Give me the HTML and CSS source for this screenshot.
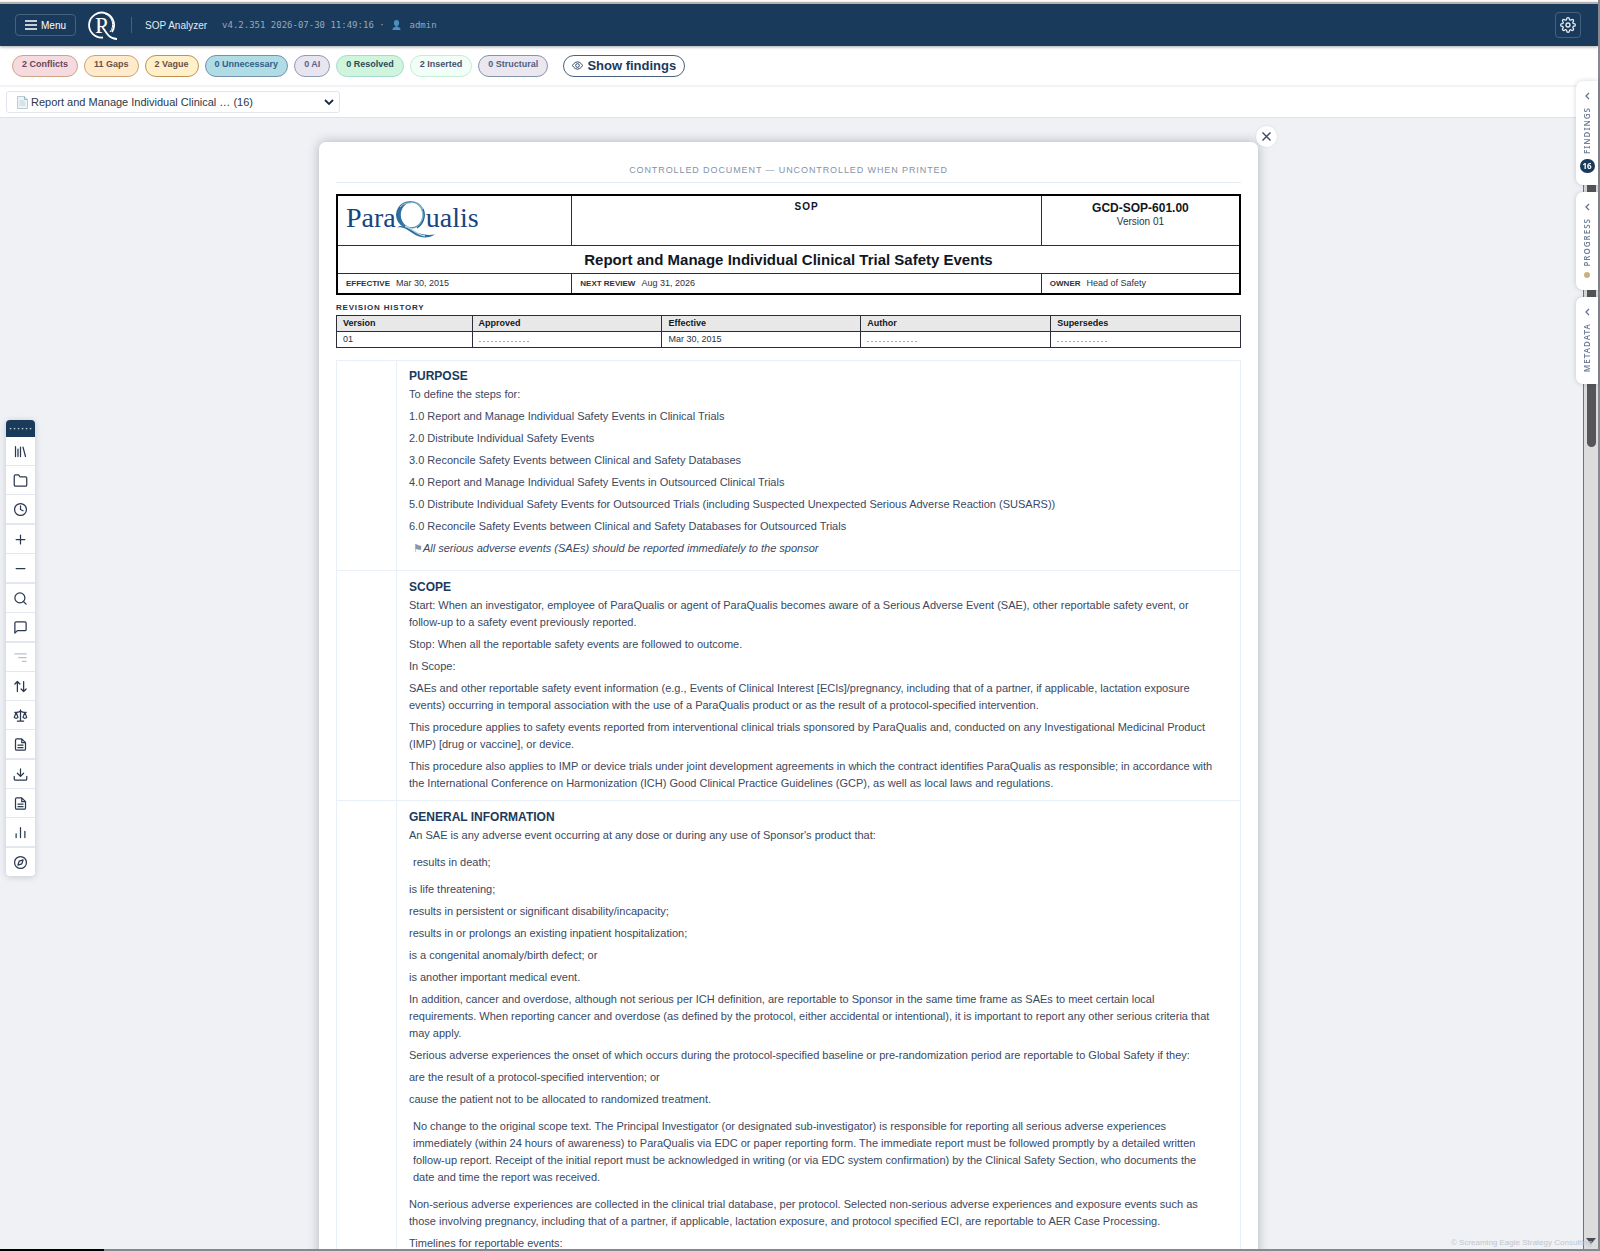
FILE: index.html
```html
<!DOCTYPE html>
<html lang="en">
<head>
    <meta charset="UTF-8">
    <meta name="viewport" content="width=device-width, initial-scale=1.0">
    <title>SOP Analyzer</title>
    <link rel="stylesheet" href="styles.css">
</head>
<body>
    <header class="topbar">
        <button class="menu-btn" type="button">
            <svg width="12" height="10" viewBox="0 0 12 10" stroke="currentColor" stroke-width="1.3"><path d="M0 1h12M0 5h12M0 9h12"/></svg>
            Menu
        </button>
        <svg class="brand" width="30" height="30" viewBox="0 0 30 30" fill="none" stroke="#fff">
            <path d="M15 27.500A12.500 12.500 0 1 1 24 22" stroke-width="1.8"/>
            <path d="M17 3.800A11.500 11.500 0 0 1 22 22" stroke-width="1"/>
            <path d="M14 16.500C17 20 20 29 29 29" stroke-width="1.8"/>
            <text x="7" y="23" class="brand-letter">P</text>
        </svg>
        <span class="divider"></span>
        <span class="app-name">SOP Analyzer</span>
        <span class="build">v4.2.351 2026-07-30 11:49:16 ·
            <svg width="9" height="10" viewBox="0 0 9 10" fill="#4a90c0"><ellipse cx="4.500" cy="3" rx="2.600" ry="3"/><path d="M3.500 5h2v2c2 0 3 1 3 3h-8c0-2 1-3 3-3z"/></svg>
            admin</span>
        <button class="gear-btn" type="button" aria-label="Settings">
            <svg width="16" height="16" viewBox="0 0 24 24" fill="none" stroke="currentColor" stroke-width="2"><circle cx="12" cy="12" r="3"/><path d="M19.400 15a1.650 1.650 0 0 0 .33 1.820l.06.06a2 2 0 1 1-2.830 2.830l-.06-.06a1.650 1.650 0 0 0-2.820 1.170V21a2 2 0 0 1-4 0v-.09a1.650 1.650 0 0 0-2.900-1.260l-.06.06a2 2 0 1 1-2.830-2.830l.06-.06a1.650 1.650 0 0 0-1.170-2.820H3a2 2 0 0 1 0-4h.09a1.650 1.650 0 0 0 1.260-2.900l-.06-.06a2 2 0 1 1 2.830-2.830l.06.06a1.650 1.650 0 0 0 2.820-1.180V3a2 2 0 0 1 4 0v.09a1.650 1.650 0 0 0 2.820 1.180l.06-.06a2 2 0 1 1 2.830 2.830l-.06.06a1.650 1.650 0 0 0 1.180 2.820H21a2 2 0 0 1 0 4h-.09a1.650 1.650 0 0 0-1.510 1z"/></svg>
        </button>
    </header>

    <div class="stats">
        <button type="button" class="pill conflicts">2 Conflicts</button>
        <button type="button" class="pill gaps">11 Gaps</button>
        <button type="button" class="pill vague">2 Vague</button>
        <button type="button" class="pill unnecessary">0 Unnecessary</button>
        <button type="button" class="pill ai">0 AI</button>
        <button type="button" class="pill resolved">0 Resolved</button>
        <button type="button" class="pill inserted">2 Inserted</button>
        <button type="button" class="pill structural">0 Structural</button>
        <button type="button" class="show-btn">
            <svg width="11" height="11" viewBox="0 0 24 24" fill="none" stroke="currentColor" stroke-width="2"><path d="M1 12s4-8 11-8 11 8 11 8-4 8-11 8S1 12 1 12z"/><circle cx="12" cy="12" r="4"/></svg>
            Show findings
        </button>
    </div>

    <div class="docbar">
        <div class="picker">
            <svg width="11" height="13" viewBox="0 0 11 13"><path d="M.5.5h7l3 3v9H.5z" fill="#eef3f6" stroke="#b9ccd6"/><path d="M7.500.5v3h3" fill="#cfe0ea" stroke="#9dbccc"/><path d="M2.500 5h5M2.500 7h6M2.500 9h6" stroke="#c5d0d8"/></svg>
            <select class="doc-select" aria-label="Document">
                <option>Report and Manage Individual Clinical … (16)</option>
            </select>
            <svg width="10" height="6" viewBox="0 0 10 6" fill="none" stroke="#1c2b45" stroke-width="1.8"><path d="M1 1l4 4 4-4"/></svg>
        </div>
    </div>

    <main class="main">
        <div class="workspace">
            <article class="page">
                <button type="button" class="close-btn" aria-label="Close">
                    <svg width="9" height="9" viewBox="0 0 9 9" stroke="#3b475c" stroke-width="1.4"><path d="M.5.5l8 8M8.500.5l-8 8"/></svg>
                </button>
                <p class="banner">CONTROLLED DOCUMENT — UNCONTROLLED WHEN PRINTED</p>

                <table class="title-table">
                    <colgroup><col class="t1"><col class="t2"><col class="t3"></colgroup>
                    <tr class="r1">
                        <td>
                            <div class="logo">
                                <span>Para</span>
                                <svg width="32" height="38" viewBox="0 0 32 38" fill="none">
                                    <defs><linearGradient id="swoosh" x1="0" y1="0" x2="1" y2="0"><stop offset="0" stop-color="#2b6699"/><stop offset=".5" stop-color="#4585b0"/><stop offset="1" stop-color="#8cc3d3"/></linearGradient></defs>
                                    <path fill-rule="evenodd" d="M15.500 0a14.500 13.800 0 1 0 .01 0zM16.500 1.600a10.700 12.300 0 1 1-.01 0z" fill="url(#swoosh)"/>
                                    <path d="M5 6C8 2.500 12 1.800 16 2.200" stroke="#a9d4de" stroke-width="1"/>
                                    <path d="M28 8C31 16 28 23 22 27" stroke="#2b6699" stroke-width="1.300"/>
                                    <path d="M2 26.500C12 20 18 37 40 33.500 33 38 25 37 18 32.500 12 28.500 8 25.500 2 26.500z" fill="#2f6f9f"/>
                                    <path d="M10 25.500c6 0 10 8 20 9.500" stroke="#b5dbe3" stroke-width="1.300"/>
                                </svg>
                                <span>ualis</span>
                            </div>
                        </td>
                        <td class="kind">SOP</td>
                        <td class="docno"><strong>GCD-SOP-601.00</strong>Version 01</td>
                    </tr>
                    <tr class="r2"><td colspan="3"><h1>Report and Manage Individual Clinical Trial Safety Events</h1></td></tr>
                    <tr class="r3">
                        <td><b>EFFECTIVE</b>Mar 30, 2015</td>
                        <td><b>NEXT REVIEW</b>Aug 31, 2026</td>
                        <td><b>OWNER</b>Head of Safety</td>
                    </tr>
                </table>

                <h2 class="rev-title">REVISION HISTORY</h2>
                <table class="rev-table">
                    <colgroup><col class="v1"><col class="v2"><col class="v3"><col class="v4"><col class="v5"></colgroup>
                    <tr><th>Version</th><th>Approved</th><th>Effective</th><th>Author</th><th>Supersedes</th></tr>
                    <tr><td>01</td><td><span class="blank"></span></td><td>Mar 30, 2015</td><td><span class="blank"></span></td><td><span class="blank"></span></td></tr>
                </table>

                <div class="sections">
                    <section class="section">
                        <h3>PURPOSE</h3>
                        <p>To define the steps for:</p>
                        <p>1.0 Report and Manage Individual Safety Events in Clinical Trials</p>
                        <p>2.0 Distribute Individual Safety Events</p>
                        <p>3.0 Reconcile Safety Events between Clinical and Safety Databases</p>
                        <p>4.0 Report and Manage Individual Safety Events in Outsourced Clinical Trials</p>
                        <p>5.0 Distribute Individual Safety Events for Outsourced Trials (including Suspected Unexpected Serious Adverse Reaction (SUSARS))</p>
                        <p>6.0 Reconcile Safety Events between Clinical and Safety Databases for Outsourced Trials</p>
                        <p class="note"><span class="flag">⚑</span>All serious adverse events (SAEs) should be reported immediately to the sponsor</p>
                    </section>
                    <section class="section">
                        <h3>SCOPE</h3>
                        <p>Start: When an investigator, employee of ParaQualis or agent of ParaQualis becomes aware of a Serious Adverse Event (SAE), other reportable safety event, or follow-up to a safety event previously reported.</p>
                        <p>Stop: When all the reportable safety events are followed to outcome.</p>
                        <p>In Scope:</p>
                        <p>SAEs and other reportable safety event information (e.g., Events of Clinical Interest [ECIs]/pregnancy, including that of a partner, if applicable, lactation exposure events) occurring in temporal association with the use of a ParaQualis product or as the result of a protocol-specified intervention.</p>
                        <p>This procedure applies to safety events reported from interventional clinical trials sponsored by ParaQualis and, conducted on any Investigational Medicinal Product (IMP) [drug or vaccine], or device.</p>
                        <p>This procedure also applies to IMP or device trials under joint development agreements in which the contract identifies ParaQualis as responsible; in accordance with the International Conference on Harmonization (ICH) Good Clinical Practice Guidelines (GCP), as well as local laws and regulations.</p>
                    </section>
                    <section class="section">
                        <h3>GENERAL INFORMATION</h3>
                        <p>An SAE is any adverse event occurring at any dose or during any use of Sponsor's product that:</p>
                        <p class="insert">results in death;</p>
                        <p>is life threatening;</p>
                        <p>results in persistent or significant disability/incapacity;</p>
                        <p>results in or prolongs an existing inpatient hospitalization;</p>
                        <p>is a congenital anomaly/birth defect; or</p>
                        <p>is another important medical event.</p>
                        <p>In addition, cancer and overdose, although not serious per ICH definition, are reportable to Sponsor in the same time frame as SAEs to meet certain local requirements. When reporting cancer and overdose (as defined by the protocol, either accidental or intentional), it is important to report any other serious criteria that may apply.</p>
                        <p>Serious adverse experiences the onset of which occurs during the protocol-specified baseline or pre-randomization period are reportable to Global Safety if they:</p>
                        <p>are the result of a protocol-specified intervention; or</p>
                        <p>cause the patient not to be allocated to randomized treatment.</p>
                        <p class="insert">No change to the original scope text. The Principal Investigator (or designated sub-investigator) is responsible for reporting all serious adverse experiences immediately (within 24 hours of awareness) to ParaQualis via EDC or paper reporting form. The immediate report must be followed promptly by a detailed written follow-up report. Receipt of the initial report must be acknowledged in writing (or via EDC system confirmation) by the Clinical Safety Section, who documents the date and time the report was received.</p>
                        <p>Non-serious adverse experiences are collected in the clinical trial database, per protocol. Selected non-serious adverse experiences and exposure events such as those involving pregnancy, including that of a partner, if applicable, lactation exposure, and protocol specified ECI, are reportable to AER Case Processing.</p>
                        <p>Timelines for reportable events:</p>
                    </section>
                </div>
            </article>
        </div>
        <div class="scrollbar"><span class="thumb"></span><span class="arrow"></span></div>
        <span class="copyright">© Screaming Eagle Strategy Consulting</span>
    </main>
    <div class="edge"></div>

    <nav class="toolbox" aria-label="Tools">
        <div class="grip">······</div>
        <div class="group">
            <button type="button" aria-label="Library"><svg viewBox="0 0 24 24"><path d="M4 4v16M8 8v12M12 5v15M16 5l4 15"/></svg></button>
            <button type="button" aria-label="Open folder"><svg viewBox="0 0 24 24"><path d="M22 19a2 2 0 0 1-2 2H4a2 2 0 0 1-2-2V5a2 2 0 0 1 2-2h5l2 3h9a2 2 0 0 1 2 2z"/></svg></button>
            <button type="button" aria-label="History"><svg viewBox="0 0 24 24"><circle cx="12" cy="12" r="9.500"/><path d="M12 6v6l4 2"/></svg></button>
        </div>
        <div class="group">
            <button type="button" aria-label="Zoom in"><svg viewBox="0 0 24 24"><path d="M12 5v14M5 12h14"/></svg></button>
            <button type="button" aria-label="Zoom out"><svg viewBox="0 0 24 24"><path d="M5 12h14"/></svg></button>
        </div>
        <div class="group">
            <button type="button" aria-label="Search"><svg viewBox="0 0 24 24"><circle cx="11" cy="11" r="8"/><path d="M21 21l-4.300-4.300"/></svg></button>
            <button type="button" aria-label="Comments"><svg viewBox="0 0 24 24"><path d="M21 15a2 2 0 0 1-2 2H7l-4 4V5a2 2 0 0 1 2-2h14a2 2 0 0 1 2 2z"/></svg></button>
        </div>
        <div class="group">
            <button type="button" class="off" aria-label="Outline"><svg viewBox="0 0 24 24"><path d="M3 6h18M9 12h12M15 18h6"/></svg></button>
            <button type="button" aria-label="Sort"><svg viewBox="0 0 24 24"><path d="M7 20V4M3 8l4-4 4 4M17 4v16M13 16l4 4 4-4"/></svg></button>
            <button type="button" aria-label="Compare"><svg viewBox="0 0 24 24"><path d="M12 3v18M7 21h10M3 7h3c2 0 4-1 6-2 2 1 4 2 6 2h3M5 7l-3 8c2 2 4 2 6 0zM19 7l-3 8c2 2 4 2 6 0z"/></svg></button>
            <button type="button" aria-label="Document"><svg viewBox="0 0 24 24"><path d="M14 3H6a2 2 0 0 0-2 2v14a2 2 0 0 0 2 2h12a2 2 0 0 0 2-2V9zM14 3v6h6M8 13h8M8 17h8"/></svg></button>
        </div>
        <div class="group">
            <button type="button" aria-label="Download"><svg viewBox="0 0 24 24"><path d="M2 15v4a2 2 0 0 0 2 2h16a2 2 0 0 0 2-2v-4M7 10l5 5 5-5M12 15V3"/></svg></button>
            <button type="button" aria-label="Report"><svg viewBox="0 0 24 24"><path d="M14 3H6a2 2 0 0 0-2 2v14a2 2 0 0 0 2 2h12a2 2 0 0 0 2-2V9zM14 3v6h6M8 13h8M8 17h8"/></svg></button>
            <button type="button" aria-label="Statistics"><svg viewBox="0 0 24 24"><path d="M5 20v-6M12 20V4M19 20v-10"/></svg></button>
        </div>
        <div class="group">
            <button type="button" aria-label="Guide"><svg viewBox="0 0 24 24"><circle cx="12" cy="12" r="9.500"/><path d="M16.200 7.800l-2.100 6.300-6.300 2.100 2.100-6.300z"/></svg></button>
        </div>
    </nav>

    <aside class="tabs">
        <button type="button" class="tab">
            <svg width="6" height="8" viewBox="0 0 6 8"><path d="M5 1L2 4l3 3"/></svg>
            <span class="tab-label">FINDINGS</span>
            <span class="count">16</span>
        </button>
        <button type="button" class="tab">
            <svg width="6" height="8" viewBox="0 0 6 8"><path d="M5 1L2 4l3 3"/></svg>
            <span class="tab-label">PROGRESS</span>
            <span class="dot"></span>
        </button>
        <button type="button" class="tab">
            <svg width="6" height="8" viewBox="0 0 6 8"><path d="M5 1L2 4l3 3"/></svg>
            <span class="tab-label">METADATA</span>
        </button>
    </aside>
</body>
</html>
```
FILE: styles.css
```css
*{
    margin: 0;
    padding: 0;
    box-sizing: border-box;
}
body{
    display: flex;
    flex-direction: column;
    height: 100vh;
    overflow: hidden;
    border-right: 2px solid #85888e;
    background-color: #fff;
    color: #3a4862;
    font-family: "Liberation Sans", Arial, sans-serif;
    font-size: 11px;
}
button{
    font-family: inherit;
    cursor: pointer;
}

/* top bar */
.topbar{
    display: flex;
    align-items: center;
    height: 44px;
    margin-top: 2px;
    padding: 0 17px 0 15px;
    border-top: 2px solid #b5b0ab;
    background-color: #1a3a5c;
    color: #e3e9f0;
    box-shadow: 0 1px 3px rgba(0, 0, 0, 0.35);
}
.menu-btn{
    display: flex;
    align-items: center;
    justify-content: center;
    gap: 4px;
    width: 61px;
    height: 22px;
    border: 1px solid #46627f;
    border-radius: 4px;
    background: none;
    color: #fff;
    font-size: 10px;
}
.brand{
    margin-left: 12px;
}
.brand-letter{
    font-family: "Liberation Serif", serif;
    font-size: 23px;
    fill: #fff;
    stroke: none;
}
.divider{
    width: 1px;
    height: 16px;
    margin: 0 13px;
    background-color: #46627f;
}
.app-name{
    font-size: 10px;
}
.build{
    margin-left: 15px;
    color: #97a8bb;
    font-family: "DejaVu Sans Mono", monospace;
    font-size: 9px;
}
.build svg{
    margin: 0 3px 0 2px;
    vertical-align: -2px;
}
.gear-btn{
    display: flex;
    align-items: center;
    justify-content: center;
    width: 26px;
    height: 26px;
    margin-left: auto;
    border: 1px solid #46627f;
    border-radius: 4px;
    background: none;
    color: #e3e9f0;
}

/* counters */
.stats{
    display: flex;
    align-items: center;
    gap: 6px;
    height: 41px;
    padding: 0 12px;
    border-bottom: 2px solid #f0f3f8;
}
.pill{
    height: 22px;
    padding: 0 9px 4px;
    border: 1px solid;
    border-radius: 11px;
    color: #45526b;
    font-size: 9px;
    font-weight: bold;
}
.conflicts{
    background-color: #f5dae0;
    border-color: #cda585;
    color: #6a4757;
}
.gaps{
    background-color: #ffeacb;
    border-color: #cda373;
    color: #6b5046;
}
.vague{
    background-color: #fff0c9;
    border-color: #bf9350;
    color: #6b5046;
}
.unnecessary{
    background-color: #b0dce5;
    border-color: #7590ab;
    color: #315f8a;
}
.ai{
    background-color: #e9e5f0;
    border-color: #8c9cb5;
    color: #566585;
}
.resolved{
    background-color: #cff6dc;
    border-color: #a3dccf;
    color: #2b4a5a;
}
.inserted{
    background-color: #f2fef8;
    border-color: #c4efd3;
}
.structural{
    background-color: #ebe7f1;
    border-color: #8494ad;
    color: #4f5f7f;
}
.show-btn{
    display: flex;
    align-items: center;
    gap: 4px;
    height: 22px;
    margin-left: 9px;
    padding: 0 8px;
    border: 1px solid #4a6280;
    border-radius: 11px;
    background-color: #fff;
    color: #1a3a5c;
    font-size: 13px;
    font-weight: bold;
}

/* document picker */
.docbar{
    display: flex;
    align-items: center;
    height: 31px;
    padding: 0 6px;
    border-bottom: 1px solid #dde3ec;
}
.picker{
    display: flex;
    align-items: center;
    gap: 3px;
    width: 334px;
    height: 22px;
    padding: 0 5px 0 10px;
    border: 1px solid #e1e6ee;
    border-radius: 3px;
}
.doc-select{
    flex: 1;
    appearance: none;
    border: none;
    background: none;
    color: #2d3748;
    font-family: inherit;
    font-size: 11px;
}

/* document */
.main{
    position: relative;
    display: flex;
    flex: 1;
    min-height: 0;
    background-color: #eff1f5;
}
.workspace{
    flex: 1;
    overflow: hidden;
    padding: 24px 6px 0 0;
}
.page{
    position: relative;
    width: 60%;
    max-width: 939px;
    margin: 0 auto;
    padding: 21px 17px 40px;
    border-radius: 7px;
    background-color: #fff;
    box-shadow: 0 0 12px rgba(30, 35, 50, 0.3);
}
.close-btn{
    position: absolute;
    top: -16px;
    right: -19px;
    display: flex;
    align-items: center;
    justify-content: center;
    width: 21px;
    height: 21px;
    border: none;
    border-radius: 50%;
    background-color: #fff;
    box-shadow: 0 0 2px rgba(30, 40, 60, 0.15);
}
.banner{
    padding-bottom: 5px;
    border-bottom: 1px solid #e6ecf4;
    color: #8592a8;
    font-size: 9px;
    line-height: 14px;
    letter-spacing: 0.1em;
    text-align: center;
}
table{
    width: 100%;
    table-layout: fixed;
    border-collapse: collapse;
}
.title-table{
    margin-top: 11px;
    border: 2px solid #000;
    color: #2b3242;
}
.title-table td{
    padding: 0 8px;
    border: 1px solid #2a2e38;
    vertical-align: top;
}
.t1{ width: 26%; }
.t2{ width: 52%; }
.t3{ width: 22%; }
.r1{ height: 50px; }
.r2{ height: 28px; }
.r3{ height: 20px; }
.logo{
    display: flex;
    height: 44px;
    padding-top: 5px;
    color: #17457f;
    font-family: "Liberation Serif", serif;
    font-size: 28px;
    line-height: 34px;
}
.logo svg{
    overflow: visible;
    margin: 0 -1px;
}
.title-table .kind{
    padding-top: 5px;
    color: #111722;
    font-size: 10px;
    font-weight: bold;
    letter-spacing: 0.1em;
    text-align: center;
}
.title-table .docno{
    padding-top: 5px;
    font-size: 10px;
    line-height: 13px;
    text-align: center;
}
.docno strong{
    display: block;
    color: #111722;
    font-size: 12px;
    line-height: 14px;
}
h1{
    color: #111722;
    font-size: 15px;
    line-height: 27px;
    text-align: center;
}
.r3{
    font-size: 9px;
    line-height: 19px;
}
.r3 td{
    height: 20px;
}
.r3 b{
    margin-right: 6px;
    font-size: 8px;
}
.rev-title{
    margin: 7px 0 1px;
    color: #2b3242;
    font-size: 8px;
    line-height: 12px;
    letter-spacing: 0.1em;
}
.rev-table{
    color: #2b3242;
    font-size: 9px;
    line-height: 15px;
}
.rev-table th,
.rev-table td{
    height: 16px;
    padding: 0 6px;
    border: 1px solid #2a2e38;
    text-align: left;
}
.rev-table th{
    background-color: #e8e8e8;
    color: #111722;
}
.v1{ width: 15%; }
.v2{ width: 21%; }
.v3{ width: 22%; }
.v4{ width: 21%; }
.v5{ width: 21%; }
.blank{
    display: inline-block;
    width: 52px;
    height: 1px;
    background: repeating-linear-gradient(to right, #a3a7b0 0 2px, transparent 2px 4px);
}
.sections{
    margin-top: 12px;
    border: 1px solid #e9eff6;
}
.section{
    margin-left: 59px;
    padding: 7px 24px 3px 12px;
    border-left: 1px solid #e9eff6;
    line-height: 17px;
}
/* row line reaches across the empty left column */
.section + .section::before{
    content: "";
    display: block;
    height: 1px;
    margin: -7px -24px 8px -72px;
    background-color: #e9eff6;
}
.section h3{
    margin-bottom: 1px;
    color: #1a3a5c;
    font-size: 12px;
    line-height: 17px;
}
.section p{
    margin-bottom: 5px;
}
.section .note{
    padding: 0 4px 5px;
    font-style: italic;
}
.flag{
    color: #8b95a5;
    font-family: "DejaVu Sans", sans-serif;
    font-style: normal;
}
.section .insert{
    padding: 5px 4px;
}

/* scroll bar and page bottom */
.scrollbar{
    display: flex;
    flex-direction: column;
    align-items: center;
    justify-content: space-between;
    width: 15px;
    border-left: 1px solid #6f7278;
    background-color: #dcdcdc;
}
.thumb{
    width: 9px;
    height: 329px;
    border-radius: 5px;
    background-color: #55555a;
}
.arrow{
    margin-bottom: 5px;
    border: 5px solid transparent;
    border-top: 6px solid #4a4a52;
    border-bottom: none;
}
.copyright{
    position: absolute;
    right: 6px;
    bottom: 2px;
    color: #c0c6cf;
    font-size: 8px;
}
.edge{
    height: 2px;
    background: linear-gradient(to right, #000 104px, #85888e 104px);
}

/* floating tools */
.toolbox{
    position: fixed;
    top: 420px;
    left: 6px;
    display: flex;
    flex-direction: column;
    gap: 2px;
    width: 29px;
    overflow: hidden;
    border-radius: 4px;
    background-color: #e3e7ee;
    box-shadow: 0 1px 6px rgba(30, 40, 60, 0.2);
}
.grip{
    height: 17px;
    margin-bottom: -2px;
    background-color: #1a3a5c;
    color: #d5dde6;
    font-size: 12px;
    line-height: 17px;
    text-align: center;
}
.group{
    display: flex;
    flex-direction: column;
    gap: 1px;
}
.group button{
    display: flex;
    align-items: center;
    justify-content: center;
    height: 28px;
    border: none;
    background-color: #fff;
    color: #2b3950;
}
.group svg{
    width: 15px;
    height: 15px;
    fill: none;
    stroke: currentColor;
    stroke-width: 2;
    stroke-linecap: round;
    stroke-linejoin: round;
}
.group .off{
    color: #b9c1cd;
}

/* right hand drawers */
.tabs{
    position: fixed;
    top: 81px;
    right: 2px;
    display: flex;
    flex-direction: column;
    gap: 7px;
}
.tab{
    display: flex;
    flex-direction: column;
    align-items: center;
    gap: 5px;
    width: 22px;
    padding: 11px 0 12px;
    border: none;
    border-radius: 7px 0 0 7px;
    background-color: #fff;
    color: #71809a;
    box-shadow: 0 0 5px rgba(30, 40, 60, 0.2);
    font-family: "Noto Sans", sans-serif;
    font-size: 8px;
    font-weight: 600;
}
.tab svg{
    margin-bottom: 2px;
    fill: none;
    stroke: #66758f;
    stroke-width: 1.3;
}
.tab-label{
    writing-mode: vertical-rl;
    transform: rotate(180deg);
    letter-spacing: 1px;
    line-height: 12px;
}
.count{
    width: 15px;
    height: 14px;
    border-radius: 7px;
    background-color: #1a3a5c;
    color: #fff;
    font-weight: bold;
    line-height: 14px;
}
.dot{
    width: 6px;
    height: 6px;
    border-radius: 50%;
    background-color: #cbb083;
}
```
